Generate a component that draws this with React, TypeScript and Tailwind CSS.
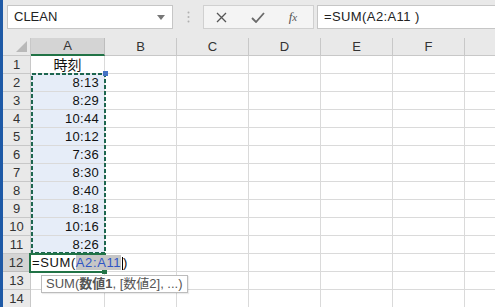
import React from "react";

const cols = ["A", "B", "C", "D", "E", "F", ""];
const widths = ["w-[74px]", "w-[72px]", "w-[72px]", "w-[72px]", "w-[72px]", "w-[72px]", "w-[40px]"];
const times = ["8:13", "8:29", "10:44", "10:12", "7:36", "8:30", "8:40", "8:18", "10:16", "8:26"];

const font = { fontFamily: '"Liberation Sans", Arial, "Noto Sans CJK JP", sans-serif' };

export default function App() {
  const rows = Array.from({ length: 14 }, (_, i) => i + 1);
  return (
    <div className="w-[495px] h-[307px] overflow-hidden flex bg-white" style={font}>
      <div className="w-[3px] shrink-0 bg-[#1f5aa6]" />
      <div className="flex-1 flex flex-col min-w-0">
        {/* formula bar */}
        <div className="h-[38px] shrink-0 bg-[#e9e9e9] flex items-start pt-[5px] pl-[4px]">
          <div className="w-[166px] h-[24px] bg-white border border-[#c6c6c6] flex items-center justify-between pl-[6px] pr-[7px]">
            <span className="text-[13px] text-[#222]">CLEAN</span>
            <svg width="8" height="5" viewBox="0 0 8 5"><path d="M0 0H8L4 5Z" fill="#777" /></svg>
          </div>
          <div className="w-[30px] h-[24px] flex items-center justify-center">
            <svg width="3" height="12" viewBox="0 0 3 12">
              <circle cx="1.5" cy="1.5" r="1" fill="#b0b0b0" />
              <circle cx="1.5" cy="6" r="1" fill="#b0b0b0" />
              <circle cx="1.5" cy="10.5" r="1" fill="#b0b0b0" />
            </svg>
          </div>
          <div className="w-[111px] h-[24px] bg-[#f4f4f4] border border-[#d0d0d0] flex items-center">
            <div className="w-[34px] flex justify-center">
              <svg width="11" height="11" viewBox="0 0 11 11"><path d="M1 1L10 10M10 1L1 10" stroke="#555" strokeWidth="1.3" /></svg>
            </div>
            <div className="w-[40px] flex justify-center">
              <svg width="14" height="11" viewBox="0 0 14 11"><path d="M1 6L5 10L13 1" stroke="#6a6a6a" strokeWidth="1.8" fill="none" /></svg>
            </div>
            <div className="w-[30px] flex justify-center">
              <span className="italic text-[13px] text-[#555]" style={{ fontFamily: '"Liberation Serif", serif' }}>f<span className="text-[11px]">x</span></span>
            </div>
          </div>
          <div className="ml-[3px] flex-1 h-[24px] bg-white border border-[#c6c6c6] border-r-0 flex items-center pl-[6px]">
            <span className="text-[13px] text-[#222] tracking-[0.4px]">=SUM(A2:A11 )</span>
          </div>
        </div>
        {/* grid */}
        <div className="relative flex-1">
          {/* header row */}
          <div className="flex h-[18px] bg-[#e9e9e9]">
            <div className="w-[28px] shrink-0 border-r border-b border-[#c8c8c8] relative">
              <svg className="absolute right-[3px] bottom-[3px]" width="11" height="11" viewBox="0 0 11 11"><path d="M11 0V11H0Z" fill="#b9b9b9" /></svg>
            </div>
            {cols.map((c, i) => (
              <div
                key={i}
                className={`${widths[i]} shrink-0 border-r flex items-center justify-center text-[13px] text-[#333] ${
                  i === 0 ? "bg-[#d4d4d4] border-b-2 border-b-[#217346] border-r-[#bdbdbd]" : "border-b border-[#c8c8c8]"
                }`}
              >
                {c}
              </div>
            ))}
          </div>
          {rows.map((r) => (
            <div key={r} className="flex h-[18px]">
              <div
                className={`w-[28px] shrink-0 border-b flex items-center justify-center text-[13px] text-[#333] ${
                  r === 12 ? "bg-[#d4d4d4] border-r-2 border-r-[#217346] border-b-[#bdbdbd]" : "bg-[#e9e9e9] border-r border-[#c8c8c8]"
                }`}
              >
                {r}
              </div>
              {cols.map((c, i) => {
                const inRange = i === 0 && r >= 2 && r <= 11;
                return (
                  <div
                    key={i}
                    className={`${widths[i]} shrink-0 border-r border-b border-[#dadada] flex items-center text-[13px] text-[#111] ${
                      inRange ? "bg-[#e6edf8] justify-end pr-[5px]" : ""
                    } ${i === 0 && r === 1 ? "justify-center" : ""}`}
                  >
                    {i === 0 && r === 1 && (
                      <span className="text-[14px]" style={{ fontFamily: '"Noto Sans CJK JP", sans-serif' }}>時刻</span>
                    )}
                    {inRange && <span className="tracking-[0.3px]">{times[r - 2]}</span>}
                  </div>
                );
              })}
            </div>
          ))}
          {/* dashed range A2:A11 */}
          <svg className="absolute left-[28px] top-[35px]" width="76" height="182" viewBox="0 0 76 182">
            <rect x="1" y="1" width="73" height="179" fill="none" stroke="#1d6650" strokeWidth="2" strokeDasharray="4 2" />
          </svg>
          <div className="absolute left-[100px] top-[33px] w-[5px] h-[5px] bg-[#4472c4]" />
          {/* active cell A12 */}
          <div className="absolute left-[26px] top-[215px] w-[77px] h-[20px] border-2 border-[#217346] flex items-center pl-[1px]">
            <span className="text-[13px] text-[#111] whitespace-nowrap tracking-[0.6px]">
              =SUM(<span className="bg-[#c6c6c6] text-[#2f55c5]">A2:A11</span>
              <span className="inline-block w-px h-[13px] bg-black align-middle ml-[1px]" />)
            </span>
          </div>
          <div className="absolute left-[99px] top-[232px] w-[5px] h-[4px] bg-[#217346]" />
          {/* tooltip */}
          <div className="absolute left-[38px] top-[237px] h-[18px] border border-[#bcbcbc] bg-white flex items-center px-[4px] shadow-[1px_1px_1px_rgba(0,0,0,0.08)]">
            <span className="text-[13px] text-[#555] whitespace-nowrap" style={{ fontFamily: '"Liberation Sans", "Noto Sans CJK JP", sans-serif' }}>
              SUM(<span className="font-bold">数値1</span>, [数値2], ...)
            </span>
          </div>
        </div>
      </div>
    </div>
  );
}
